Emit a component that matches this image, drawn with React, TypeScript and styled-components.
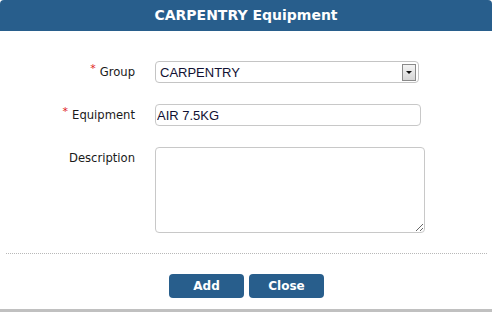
import styled, { createGlobalStyle } from "styled-components";

const GlobalStyles = createGlobalStyle`
  body {
    margin: 0;
    background: #ffffff;
  }
`;

const Dialog = styled.div`
  width: 492px;
  height: 312px;
  display: flex;
  flex-direction: column;
  background: #ffffff;
  overflow: hidden;
`;

const Header = styled.header`
  height: 31px;
  background: #285e8c;
  border-top-left-radius: 4px;
  border-top-right-radius: 4px;
  color: #ffffff;
  font-family: "DejaVu Sans", sans-serif;
  font-weight: bold;
  font-size: 14px;
  line-height: 31px;
  text-align: center;
`;

const Form = styled.form`
  display: grid;
  grid-template-columns: 135px 265px;
  grid-auto-rows: auto;
  align-items: start;
  column-gap: 20px;
  row-gap: 21px;
  padding-top: 30px;
  font-family: "DejaVu Sans", sans-serif;
  font-size: 11.6px;
  color: #1a1a1a;
`;

const Label = styled.label`
  text-align: right;
  height: 22px;
  line-height: 22px;
  white-space: nowrap;
`;

const Req = styled.span`
  display: inline-block;
  color: #e02020;
  font-size: 11px;
  line-height: 11px;
  transform: translateY(-4px);
  margin-right: 4px;
`;

const SelectBox = styled.div`
  width: 264px;
  height: 22px;
  box-sizing: border-box;
  border: 1px solid #c4c4c4;
  border-radius: 4px;
  display: flex;
  align-items: center;
  padding-right: 2px;
`;

const Select = styled.select`
  appearance: none;
  flex: 1;
  border: none;
  background: transparent;
  outline: none;
  font-family: "Liberation Sans", Arial, sans-serif;
  font-size: 13px;
  color: #111133;
  padding: 0 0 0 4px;
  height: 20px;
`;

const ArrowBox = styled.span`
  width: 14px;
  height: 17px;
  box-sizing: border-box;
  border: 1px solid #8a8a8a;
  background: linear-gradient(#f4f4f4, #d6d6d6);
  display: flex;
  align-items: center;
  justify-content: center;
`;

const Arrow = styled.span`
  width: 0;
  height: 0;
  border-left: 3px solid transparent;
  border-right: 3px solid transparent;
  border-top: 3px solid #111111;
`;

const TextInput = styled.input`
  display: block;
  width: 266px;
  height: 22px;
  box-sizing: border-box;
  border: 1px solid #c8c8c8;
  border-radius: 4px;
  padding: 0 0 0 1px;
  margin: 0;
  font-family: "Liberation Sans", Arial, sans-serif;
  font-size: 13px;
  color: #111133;
  outline: none;
`;

const TextArea = styled.textarea`
  display: block;
  width: 270px;
  height: 86px;
  box-sizing: border-box;
  margin: 0;
  border: 1px solid #c8c8c8;
  border-radius: 4px;
  font-family: "Liberation Sans", Arial, sans-serif;
  font-size: 13px;
  outline: none;
`;

const Divider = styled.hr`
  margin: 20px 5px 0 6px;
  border: none;
  border-top: 1px dotted #b8b8b8;
  height: 0;
`;

const Footer = styled.div`
  display: flex;
  justify-content: center;
  gap: 5px;
  padding-top: 20px;
  padding-left: 1px;
`;

const Button = styled.button`
  width: 75px;
  height: 24px;
  border: none;
  border-radius: 4px;
  background: #285e8c;
  color: #ffffff;
  font-family: "DejaVu Sans", sans-serif;
  font-weight: bold;
  font-size: 12px;
  cursor: pointer;
`;

const BottomEdge = styled.div`
  margin-top: auto;
  height: 3px;
  background: #c0c0c0;
`;

export default function App() {
  return (
    <>
      <GlobalStyles />
      <Dialog>
        <Header>CARPENTRY Equipment</Header>
        <Form>
          <Label>
            <Req>*</Req>Group
          </Label>
          <SelectBox>
            <Select defaultValue="CARPENTRY">
              <option>CARPENTRY</option>
            </Select>
            <ArrowBox>
              <Arrow />
            </ArrowBox>
          </SelectBox>

          <Label>
            <Req>*</Req>Equipment
          </Label>
          <TextInput defaultValue="AIR 7.5KG" />

          <Label>Description</Label>
          <TextArea />
        </Form>
        <Divider />
        <Footer>
          <Button type="button">Add</Button>
          <Button type="button">Close</Button>
        </Footer>
        <BottomEdge />
      </Dialog>
    </>
  );
}
